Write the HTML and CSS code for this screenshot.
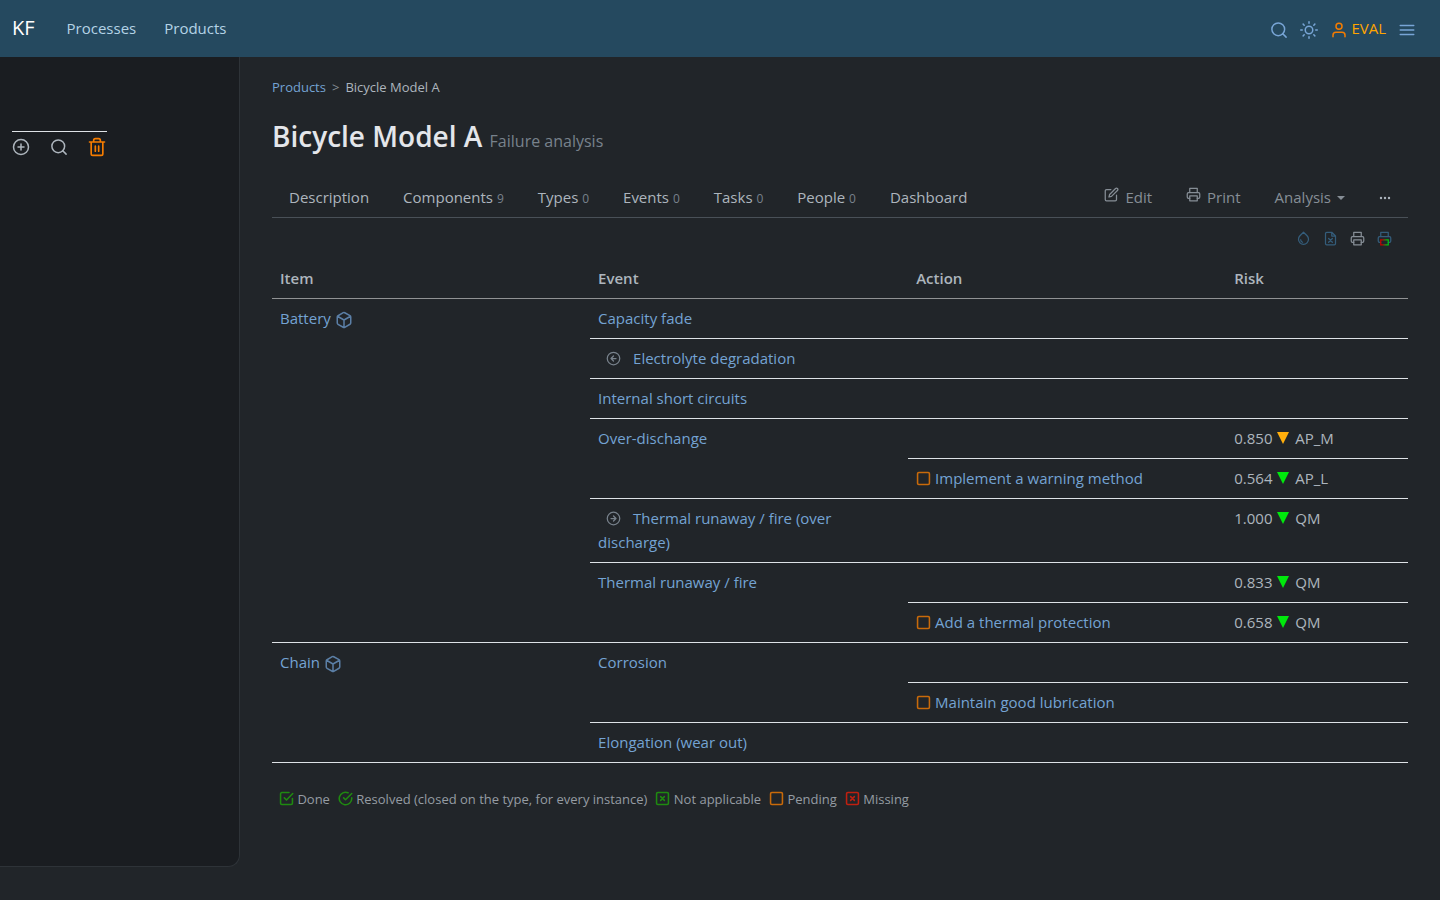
FILE: index.html
```
<!doctype html>
<html lang="en">
<head>
    <meta charset="UTF-8">
    <meta name="viewport" content="width=device-width, initial-scale=1">
    <title>Bicycle Model A - Failure analysis</title>
    <link rel="stylesheet" href="styles.css">
</head>
<body>
    <!-- icon definitions -->
    <svg class="defs" aria-hidden="true">
        <linearGradient id="red-green" gradientUnits="userSpaceOnUse" x1="6" y1="0" x2="18" y2="0">
            <stop offset="0.2" stop-color="#c00000"/>
            <stop offset="0.8" stop-color="#00c010"/>
        </linearGradient>
        <symbol id="search" viewBox="0 0 24 24"><circle cx="11" cy="11" r="8.500"/><path d="M21.500 21.500l-4.500-4.500"/></symbol>
        <symbol id="sun" viewBox="0 0 24 24"><circle cx="12" cy="12" r="5"/><path d="M12 1v2M12 21v2M4.200 4.200l1.400 1.400M18.400 18.400l1.400 1.400M1 12h2M21 12h2M4.200 19.800l1.400-1.400M18.400 5.600l1.400-1.400"/></symbol>
        <symbol id="user" viewBox="0 0 24 24"><path d="M20 21v-2a4 4 0 0 0-4-4H8a4 4 0 0 0-4 4v2"/><circle cx="12" cy="7" r="4"/></symbol>
        <symbol id="menu" viewBox="0 0 24 24"><path d="M3 6h18M3 12h18M3 18h18"/></symbol>
        <symbol id="plus" viewBox="0 0 24 24"><circle cx="12" cy="12" r="10"/><path d="M12 8v8M8 12h8"/></symbol>
        <symbol id="trash" viewBox="0 0 24 24"><path d="M3 6h18M19 6v14a2 2 0 0 1-2 2H7a2 2 0 0 1-2-2V6M8 6V4a2 2 0 0 1 2-2h4a2 2 0 0 1 2 2v2M10 11v6M14 11v6"/></symbol>
        <symbol id="edit" viewBox="0 0 24 24"><path d="M11 4H4a2 2 0 0 0-2 2v14a2 2 0 0 0 2 2h14a2 2 0 0 0 2-2v-7"/><path d="M18.500 2.500a2.100 2.100 0 0 1 3 3L12 15l-4 1 1-4 9.500-9.500z"/></symbol>
        <symbol id="printer" viewBox="0 0 24 24"><path d="M6 9V2h12v7M6 18H4a2 2 0 0 1-2-2v-5a2 2 0 0 1 2-2h16a2 2 0 0 1 2 2v5a2 2 0 0 1-2 2h-2"/><path d="M6 14h12v8H6z"/></symbol>
        <symbol id="printer-color" viewBox="0 0 24 24"><path d="M6 9V2h12v7M6 18H4a2 2 0 0 1-2-2v-5a2 2 0 0 1 2-2h16a2 2 0 0 1 2 2v5a2 2 0 0 1-2 2h-2"/><path stroke="url(#red-green)" stroke-linejoin="miter" d="M6 14h12v8H6z"/></symbol>
        <symbol id="drop" viewBox="0 0 24 24"><path d="M12 2l5.700 5.700a8 8 0 1 1-11.400 0z"/><path d="M7.500 14a4.500 4.500 0 0 0 3 4"/></symbol>
        <symbol id="file-x" viewBox="0 0 24 24"><path d="M14 2H6a2 2 0 0 0-2 2v16a2 2 0 0 0 2 2h12a2 2 0 0 0 2-2V8zM14 2v6h6M9 12l6 6M15 12l-6 6"/></symbol>
        <symbol id="box" viewBox="0 0 24 24"><path d="M21 16V8a2 2 0 0 0-1-1.700l-7-4a2 2 0 0 0-2 0l-7 4A2 2 0 0 0 3 8v8a2 2 0 0 0 1 1.700l7 4a2 2 0 0 0 2 0l7-4a2 2 0 0 0 1-1.700zM3.300 7L12 12l8.700-5M12 22V12"/></symbol>
        <symbol id="left" viewBox="0 0 24 24"><circle cx="12" cy="12" r="10"/><path d="M12 8l-4 4 4 4M16 12H8"/></symbol>
        <symbol id="right" viewBox="0 0 24 24"><circle cx="12" cy="12" r="10"/><path d="M12 16l4-4-4-4M8 12h8"/></symbol>
        <symbol id="square" viewBox="0 0 24 24"><rect x="2.500" y="2.500" width="19" height="19" rx="2"/></symbol>
        <symbol id="check-square" viewBox="0 0 24 24"><path d="M8.500 11l3.500 3.500L22 4"/><path d="M21.500 12v7.500a2 2 0 0 1-2 2h-15a2 2 0 0 1-2-2v-15a2 2 0 0 1 2-2H16"/></symbol>
        <symbol id="check-circle" viewBox="0 0 24 24"><path d="M22 11v1a10 10 0 1 1-5.900-9.100"/><path d="M22 4L12 14l-3-3"/></symbol>
        <symbol id="x-square" viewBox="0 0 24 24"><rect x="2.500" y="2.500" width="19" height="19" rx="2"/><path d="M9 9l6 6M15 9l-6 6"/></symbol>
    </svg>

    <header class="navbar">
        <a class="brand" href="#">KF</a>
        <nav class="nav-main">
            <a href="#">Processes</a>
            <a href="#">Products</a>
        </nav>
        <div class="nav-tools">
            <button type="button" aria-label="Search"><svg class="icon"><use href="#search"/></svg></button>
            <button type="button" aria-label="Theme"><svg class="icon"><use href="#sun"/></svg></button>
            <a class="user" href="#"><svg class="icon"><use href="#user"/></svg><span>EVAL</span></a>
            <button type="button" aria-label="Menu"><svg class="icon"><use href="#menu"/></svg></button>
        </div>
    </header>

    <div class="layout">
        <aside class="sidebar">
            <div class="tree-tools">
                <button type="button" aria-label="Add"><svg class="icon"><use href="#plus"/></svg></button>
                <button type="button" aria-label="Search tree"><svg class="icon"><use href="#search"/></svg></button>
                <button class="trash" type="button" aria-label="Trash"><svg class="icon"><use href="#trash"/></svg></button>
            </div>
        </aside>

        <main class="content">
            <nav class="breadcrumb">
                <a href="#">Products</a>
                <span class="sep">&gt;</span>
                <span>Bicycle Model A</span>
            </nav>

            <h1>Bicycle Model A <small>Failure analysis</small></h1>

            <div class="tabs">
                <a href="#">Description</a>
                <a href="#">Components <small>9</small></a>
                <a href="#">Types <small>0</small></a>
                <a href="#">Events <small>0</small></a>
                <a href="#">Tasks <small>0</small></a>
                <a href="#">People <small>0</small></a>
                <a href="#">Dashboard</a>
                <div class="tab-actions">
                    <a href="#"><svg class="icon"><use href="#edit"/></svg>Edit</a>
                    <a href="#"><svg class="icon"><use href="#printer"/></svg>Print</a>
                    <button class="dropdown" type="button">Analysis</button>
                    <button type="button" aria-label="More"><svg class="dots" viewBox="0 0 12 4"><circle cx="2" cy="2" r="1.200"/><circle cx="6" cy="2" r="1.200"/><circle cx="10" cy="2" r="1.200"/></svg></button>
                </div>
            </div>

            <div class="exports">
                <a href="#" aria-label="Colors"><svg class="icon"><use href="#drop"/></svg></a>
                <a href="#" aria-label="Spreadsheet"><svg class="icon"><use href="#file-x"/></svg></a>
                <a class="grey" href="#" aria-label="Print"><svg class="icon"><use href="#printer"/></svg></a>
                <a href="#" aria-label="Print in color"><svg class="icon"><use href="#printer-color"/></svg></a>
            </div>

            <table class="analysis">
                <thead>
                    <tr><th>Item</th><th>Event</th><th>Action</th><th>Risk</th></tr>
                </thead>
                <tbody>
                    <tr>
                        <td rowspan="8"><a href="#">Battery</a> <svg class="icon box"><use href="#box"/></svg></td>
                        <td><a href="#">Capacity fade</a></td>
                        <td></td>
                        <td></td>
                    </tr>
                    <tr>
                        <td><svg class="icon arrow"><use href="#left"/></svg><a href="#">Electrolyte degradation</a></td>
                        <td></td>
                        <td></td>
                    </tr>
                    <tr>
                        <td><a href="#">Internal short circuits</a></td>
                        <td></td>
                        <td></td>
                    </tr>
                    <tr>
                        <td rowspan="2"><a href="#">Over-dischange</a></td>
                        <td></td>
                        <td>0.850 <i class="level medium"></i> AP_M</td>
                    </tr>
                    <tr>
                        <td><svg class="icon state pending"><use href="#square"/></svg> <a href="#">Implement a warning method</a></td>
                        <td>0.564 <i class="level low"></i> AP_L</td>
                    </tr>
                    <tr>
                        <td><svg class="icon arrow"><use href="#right"/></svg><a href="#">Thermal runaway / fire (over discharge)</a></td>
                        <td></td>
                        <td>1.000 <i class="level low"></i> QM</td>
                    </tr>
                    <tr>
                        <td rowspan="2"><a href="#">Thermal runaway / fire</a></td>
                        <td></td>
                        <td>0.833 <i class="level low"></i> QM</td>
                    </tr>
                    <tr>
                        <td><svg class="icon state pending"><use href="#square"/></svg> <a href="#">Add a thermal protection</a></td>
                        <td>0.658 <i class="level low"></i> QM</td>
                    </tr>
                    <tr>
                        <td rowspan="3"><a href="#">Chain</a> <svg class="icon box"><use href="#box"/></svg></td>
                        <td rowspan="2"><a href="#">Corrosion</a></td>
                        <td></td>
                        <td></td>
                    </tr>
                    <tr>
                        <td><svg class="icon state pending"><use href="#square"/></svg> <a href="#">Maintain good lubrication</a></td>
                        <td></td>
                    </tr>
                    <tr>
                        <td><a href="#">Elongation (wear out)</a></td>
                        <td></td>
                        <td></td>
                    </tr>
                </tbody>
            </table>

            <ul class="legend">
                <li><svg class="icon state done"><use href="#check-square"/></svg> Done</li>
                <li><svg class="icon state done"><use href="#check-circle"/></svg> Resolved (closed on the type, for every instance)</li>
                <li><svg class="icon state done"><use href="#x-square"/></svg> Not applicable</li>
                <li><svg class="icon state pending"><use href="#square"/></svg> Pending</li>
                <li><svg class="icon state missing"><use href="#x-square"/></svg> Missing</li>
            </ul>
        </main>
    </div>
</body>
</html>
```
FILE: styles.css
```
* {
    box-sizing: border-box;
}
body {
    margin: 0;
    background-color: #212529;
    color: #adb5bd;
    font-family: "Open Sans", "Noto Sans", sans-serif;
    font-size: 15px;
    line-height: 24px;
}
a {
    color: #74a3d3;
    text-decoration: none;
}
button {
    padding: 0;
    border: 0;
    background: none;
    color: inherit;
    font: inherit;
    cursor: pointer;
}
.defs {
    position: absolute;
    width: 0;
    height: 0;
}
.icon {
    width: 18px;
    height: 18px;
    fill: none;
    stroke: currentColor;
    stroke-width: 2;
    stroke-linecap: round;
    stroke-linejoin: round;
}

/* top bar */
.navbar {
    display: flex;
    align-items: center;
    height: 57px;
    padding: 0 24px 2px 12px;
    background-color: #25495f;
}
.brand {
    color: #fff;
    font-size: 20px;
}
.nav-main {
    display: flex;
    gap: 28px;
    margin-left: 32px;
}
.nav-main a {
    color: #b4d3e6;
}
.nav-tools {
    display: flex;
    align-items: center;
    gap: 12px;
    margin-left: auto;
    color: #78a5d6;
}
.nav-tools .icon {
    display: block;
    margin-top: 4px;
}
.user {
    display: flex;
    align-items: center;
    gap: 3px;
    color: #ffa500;
}
.user .icon {
    color: #f57c00;
}

/* left panel and page */
.layout {
    display: flex;
    align-items: flex-start;
}
.sidebar {
    flex: 0 0 240px;
    height: 90vh;
    padding: 74px 12px;
    background-color: #1a1d21;
    border: 1px solid #2e3338;
    border-width: 0 1px 1px 0;
    border-bottom-right-radius: 12px;
}
.tree-tools {
    display: flex;
    align-items: center;
    justify-content: space-between;
    width: 95px;
    padding-top: 5px;
    border-top: 1px solid #dee2e6;
    color: #adb5bd;
}
.tree-tools .icon {
    display: block;
}
.tree-tools .trash .icon {
    width: 20px;
    height: 20px;
}
.trash {
    color: #f57c00;
}
.content {
    flex: 1;
    min-width: 0;
    padding: 18px 32px;
}
.breadcrumb {
    display: flex;
    gap: 6px;
    font-size: 13px;
}
.sep {
    color: #868e96;
}
h1 {
    margin: 18px 0 20px;
    color: #e4e6ea;
    font-size: 28px;
    font-weight: 600;
    line-height: 38px;
}
h1 small {
    color: #78828c;
    font-size: 16px;
    font-weight: 400;
}

/* tabs */
.tabs {
    display: flex;
    gap: 34px;
    padding: 5px 17px 6px;
    border-bottom: 1px solid #495057;
}
.tabs a {
    color: #adb5bd;
}
.tabs small {
    color: #78828c;
    font-size: 12px;
}
.tab-actions {
    display: flex;
    align-items: flex-start;
    gap: 34px;
    margin-left: auto;
    color: #868e96;
}
.tabs .tab-actions a {
    color: #868e96;
}
.tab-actions .icon {
    width: 15px;
    height: 15px;
    margin-right: 6px;
    vertical-align: 1px;
}
.dropdown::after {
    content: "";
    display: inline-block;
    margin-left: 6px;
    border: 4px solid transparent;
    border-top-color: currentColor;
    border-bottom: 0;
    vertical-align: 3px;
}
.dots {
    display: block;
    width: 12px;
    height: 4px;
    margin-top: 11px;
    fill: #adb5bd;
}
.exports {
    display: flex;
    justify-content: flex-end;
    gap: 12px;
    padding: 13px 16px 12px;
}
.exports a {
    color: #345d7b;
}
.exports .grey {
    color: #868e96;
}
.exports .icon {
    display: block;
    width: 15px;
    height: 15px;
}

/* failure table */
.analysis {
    width: 100%;
    table-layout: fixed;
    border-collapse: collapse;
}
.analysis th,
.analysis td {
    width: 28%;
    height: 40px;
    padding: 7px 8px 8px;
    border-bottom: 1px solid #dee2e6;
    text-align: left;
    vertical-align: top;
}
.analysis th {
    padding: 8px 8px 7px;
    border-bottom-color: #909294;
    font-weight: 600;
}
.analysis th:last-child {
    width: 16%;
}
.box {
    color: #5b7fa6;
    vertical-align: -5px;
}
.arrow {
    width: 15px;
    height: 15px;
    margin: 0 12px 0 8px;
    color: #78828c;
    vertical-align: -2px;
}
.state {
    width: 15px;
    height: 15px;
    stroke-width: 2.5;
    vertical-align: -2px;
}
.pending {
    color: #c86a0a;
}
.done {
    color: #1f8a10;
}
.missing {
    color: #c02010;
}
.level {
    display: inline-block;
    margin: 0 2px 0 1px;
    border: 6px solid transparent;
    border-top: 12px solid;
    border-bottom: 0;
}
.level.low {
    border-top-color: #00e80c;
}
.level.medium {
    border-top-color: #ffae0c;
}
.legend {
    display: flex;
    flex-wrap: wrap;
    gap: 8px;
    margin: 24px 0 0;
    padding: 0 7px;
    color: #959ca3;
    font-size: 13px;
    list-style: none;
}
```
